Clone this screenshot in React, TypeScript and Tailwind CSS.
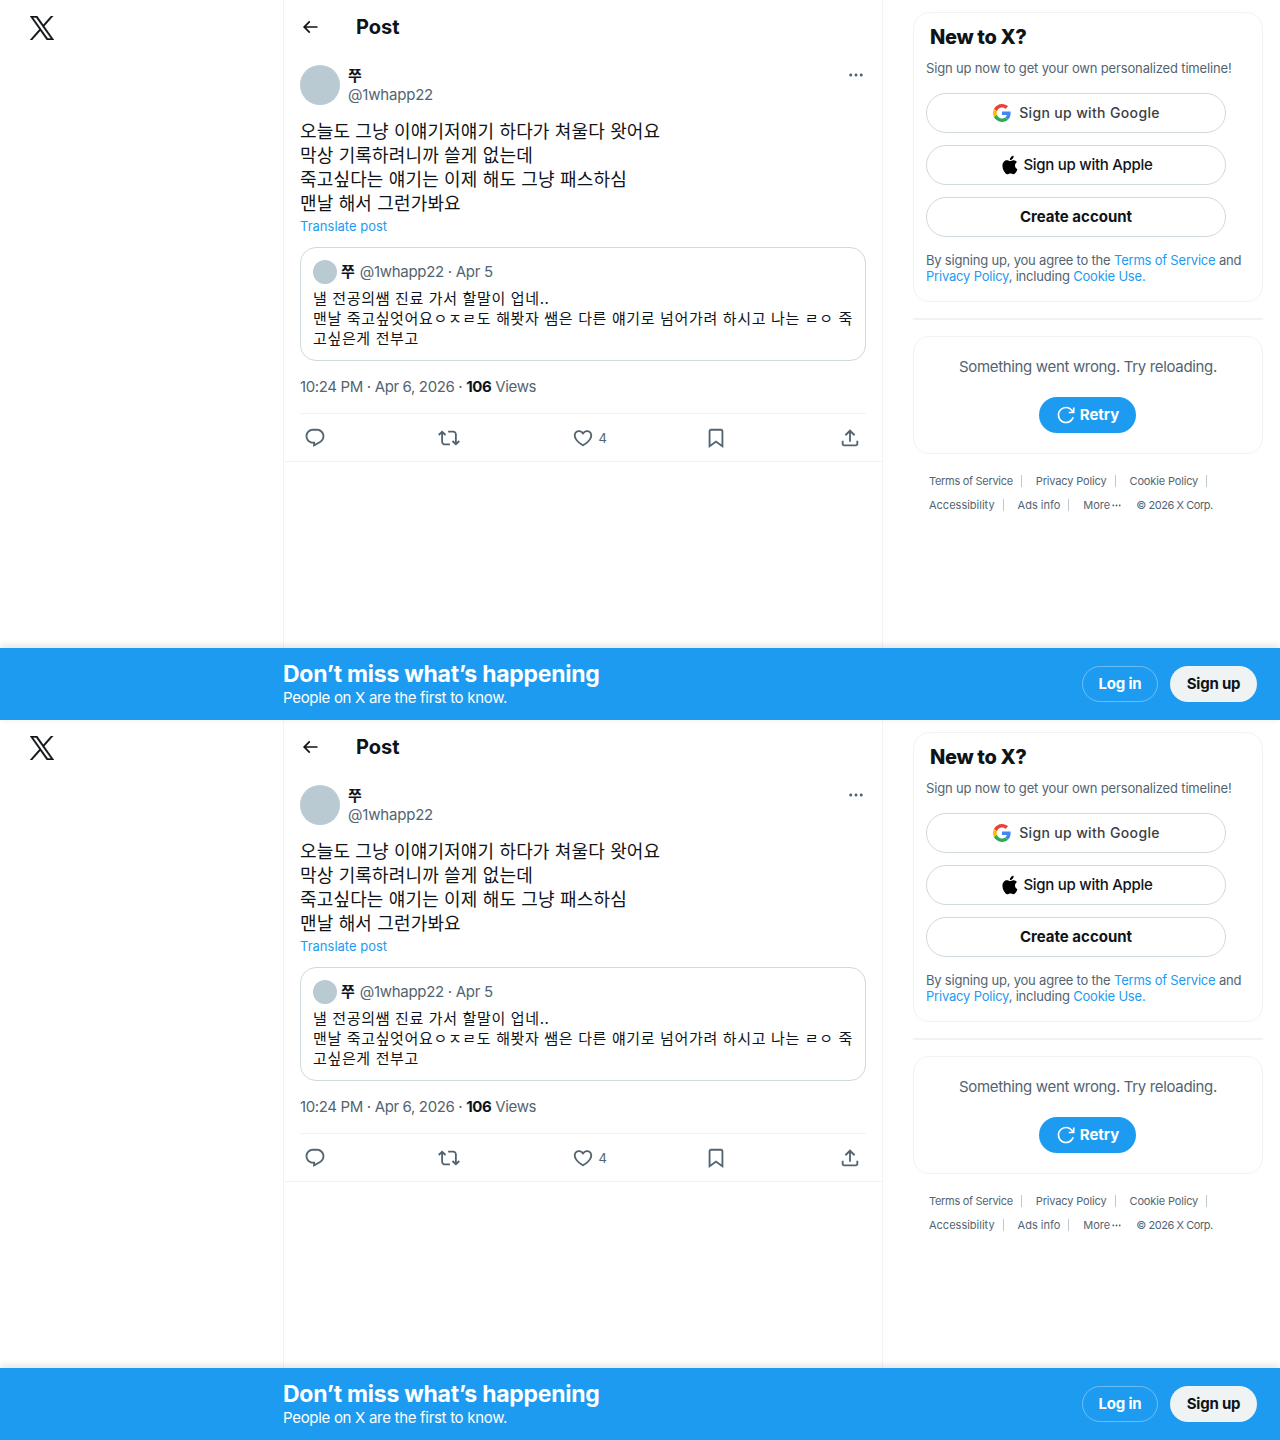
const icons = {
  x: 'M14.258 10.152L23.176 0h-2.113l-7.747 8.813L7.133 0H0l9.352 13.328L0 23.973h2.113l8.176-9.309 6.531 9.309h7.133zm-2.895 3.293l-.949-1.328L2.875 1.56h3.246l6.086 8.523.945 1.328 7.91 11.078h-3.246zm0 0',
  back: 'M7.414 13l5.043 5.04-1.414 1.42L3.586 12l7.457-7.46 1.414 1.42L7.414 11H21v2H7.414z',
  more: 'M3 12c0-1.1.9-2 2-2s2 .9 2 2-.9 2-2 2-2-.9-2-2zm9 2c1.1 0 2-.9 2-2s-.9-2-2-2-2 .9-2 2 .9 2 2 2zm7 0c1.1 0 2-.9 2-2s-.9-2-2-2-2 .9-2 2 .9 2 2 2z',
  reply: 'M1.751 10c0-4.42 3.584-8 8.005-8h4.366c4.49 0 8.129 3.64 8.129 8.13 0 2.96-1.607 5.68-4.196 7.11l-8.054 4.46v-3.69h-.067c-4.49.1-8.183-3.51-8.183-8.01zm8.005-6c-3.317 0-6.005 2.69-6.005 6 0 3.37 2.77 6.08 6.138 6.01l.351-.01h1.761v2.3l5.087-2.81c1.951-1.08 3.163-3.13 3.163-5.36 0-3.39-2.744-6.13-6.129-6.13H9.756z',
  repost: 'M4.5 3.88l4.432 4.14-1.364 1.46L5.5 7.55V16c0 1.1.896 2 2 2H13v2H7.5c-2.209 0-4-1.79-4-4V7.55L1.432 9.48.068 8.02 4.5 3.88zM16.5 6H11V4h5.5c2.209 0 4 1.79 4 4v8.45l2.068-1.93 1.364 1.46-4.432 4.14-4.432-4.14 1.364-1.46 2.068 1.93V8c0-1.1-.896-2-2-2z',
  heart: 'M16.697 5.5c-1.222-.06-2.679.51-3.89 2.16l-.805 1.09-.806-1.09C9.984 6.01 8.526 5.44 7.304 5.5c-1.243.07-2.349.78-2.91 1.91-.552 1.12-.633 2.78.479 4.82 1.074 1.97 3.257 4.27 7.129 6.61 3.87-2.34 6.052-4.64 7.126-6.61 1.111-2.04 1.03-3.7.477-4.82-.561-1.13-1.666-1.84-2.908-1.91zm4.187 7.69c-1.351 2.48-4.001 5.12-8.379 7.67l-.503.3-.504-.3c-4.379-2.55-7.029-5.19-8.382-7.67-1.36-2.5-1.41-4.86-.514-6.67.887-1.79 2.647-2.91 4.601-3.01 1.651-.09 3.368.56 4.798 2.01 1.429-1.45 3.146-2.1 4.796-2.01 1.954.1 3.714 1.22 4.601 3.01.896 1.81.846 4.17-.514 6.67z',
  bookmark: 'M4 4.5C4 3.12 5.119 2 6.5 2h11C18.881 2 20 3.12 20 4.5v18.44l-8-5.71-8 5.71V4.5zM6.5 4c-.276 0-.5.22-.5.5v14.56l6-4.29 6 4.29V4.5c0-.28-.224-.5-.5-.5h-11z',
  share: 'M12 2.59l5.7 5.7-1.41 1.42L13 6.41V16h-2V6.41l-3.3 3.3-1.41-1.42L12 2.59zM21 15l-.02 3.51c0 1.38-1.12 2.49-2.5 2.49H5.5C4.11 21 3 19.88 3 18.5V15h2v3.5c0 .28.22.5.5.5h12.98c.28 0 .5-.22.5-.51L19 15h2z',
  retry: 'M12 4c-4.418 0-8 3.58-8 8s3.582 8 8 8c3.584 0 6.615-2.35 7.635-5.6l1.91.6C20.272 19.06 16.479 22 12 22 6.477 22 2 17.52 2 12S6.477 2 12 2c3.46 0 6.51 1.76 8.3 4.43V3h2v7h-7V8h3.67C17.56 5.58 14.96 4 12 4z',
  apple: 'M16.365 1.43c0 1.14-.493 2.27-1.177 3.08-.744.9-1.99 1.57-2.987 1.57-.12 0-.23-.02-.3-.03-.01-.06-.04-.22-.04-.39 0-1.15.572-2.27 1.206-2.98.804-.94 2.142-1.64 3.248-1.68.03.13.05.28.05.43zm4.565 15.71c-.03.07-.463 1.58-1.518 3.12-.945 1.34-1.94 2.71-3.43 2.71-1.517 0-1.9-.88-3.63-.88-1.698 0-2.302.91-3.67.91-1.377 0-2.332-1.26-3.428-2.8-1.287-1.82-2.323-4.63-2.323-7.28 0-4.28 2.797-6.55 5.552-6.55 1.448 0 2.675.95 3.6.95.865 0 2.222-1.01 3.902-1.01.613 0 2.886.06 4.374 2.19-.13.09-2.383 1.37-2.383 4.19 0 3.26 2.854 4.42 2.955 4.45z',
};

const Icon = ({ d, className }: { d: string; className: string }) => (
  <svg viewBox="0 0 24 24" fill="currentColor" className={className}>
    <path d={d} />
  </svg>
);

const GoogleIcon = () => (
  <svg viewBox="0 0 48 48" className="h-[18px] w-[18px]">
    <path fill="#EA4335" d="M24 9.5c3.54 0 6.71 1.22 9.21 3.6l6.85-6.85C35.9 2.38 30.47 0 24 0 14.62 0 6.51 5.38 2.56 13.22l7.98 6.19C12.43 13.72 17.74 9.5 24 9.5z" />
    <path fill="#4285F4" d="M46.98 24.55c0-1.57-.15-3.09-.38-4.55H24v9.02h12.94c-.58 2.96-2.26 5.48-4.78 7.18l7.73 6c4.51-4.18 7.09-10.36 7.09-17.65z" />
    <path fill="#FBBC05" d="M10.53 28.59c-.48-1.45-.76-2.99-.76-4.59s.27-3.14.76-4.59l-7.98-6.19C.92 16.46 0 20.12 0 24c0 3.88.92 7.54 2.56 10.78l7.97-6.19z" />
    <path fill="#34A853" d="M24 48c6.48 0 11.93-2.13 15.89-5.81l-7.73-6c-2.15 1.45-4.92 2.3-8.16 2.3-6.26 0-11.57-4.22-13.47-9.91l-7.98 6.19C6.51 42.62 14.62 48 24 48z" />
  </svg>
);

const Separator = ({ end }: { end?: boolean }) => (
  <span className={end ? 'ml-[8px] h-3 w-px bg-[#b9cad3]' : 'ml-[8px] mr-[14px] h-3 w-px bg-[#b9cad3]'} />
);

const PostColumn = () => (
  <main className="w-[600px] shrink-0 border-x border-[#eff3f4]">
    <div className="flex h-[54px] items-center pl-[16px]">
      <Icon d={icons.back} className="h-5 w-5 text-[#0f1419]" />
      <h2 className="ml-[36px] text-[20px] font-bold leading-6 text-[#0f1419]">Post</h2>
    </div>
    <div className="px-[16px] pt-[11px]">
      <div className="flex items-center gap-[8px]">
        <div className="h-10 w-10 rounded-full bg-[#b9cad3]" />
        <div className="flex-1">
          <div className="h-5 pt-[2px] text-[15px] font-bold leading-[18px] text-[#0f1419]">쭈</div>
          <div className="text-[15px] leading-5 tracking-[-0.2px] text-[#536471]">@1whapp22</div>
        </div>
        <Icon d={icons.more} className="mb-[20px] mr-[1px] h-[18px] w-[18px] text-[#536471]" />
      </div>
      <div className="mt-[15px] text-[18px] leading-6 tracking-[0.15px] text-[#0f1419]">
        <p>오늘도 그냥 이얘기저얘기 하다가 쳐울다 왓어요</p>
        <p>막상 기록하려니까 쓸게 없는데</p>
        <p>죽고싶다는 얘기는 이제 해도 그냥 패스하심</p>
        <p>맨날 해서 그런가봐요</p>
      </div>
      <div className="mt-[2px] text-[13px] leading-4 text-[#1d9bf0]">Translate post</div>
      <div className="mt-[13px] rounded-2xl border border-[#cfd9de] px-[12px] pb-[11px] pt-[12px]">
        <div className="flex items-center text-[15px] leading-6">
          <div className="mr-[4px] h-6 w-6 rounded-full bg-[#b9cad3]" />
          <span className="font-bold text-[#0f1419]">쭈</span>
          <span className="ml-[5px] tracking-[-0.3px] text-[#536471]">@1whapp22 · Apr 5</span>
        </div>
        <div className="mt-[5px] text-[15px] leading-5 tracking-[0.65px] text-[#0f1419]">
          <p>낼 전공의쌤 진료 가서 할말이 업네..</p>
          <p>맨날 죽고싶엇어요ㅇㅈㄹ도 해봣자 쌤은 다른 얘기로 넘어가려 하시고 나는 ㄹㅇ 죽고싶은게 전부고</p>
        </div>
      </div>
      <div className="mt-[16px] text-[15px] leading-5 tracking-[-0.36px] text-[#536471]">
        10:24 PM · Apr 6, 2026 · <span className="font-bold text-[#0f1419]">106</span> Views
      </div>
      <div className="mt-[16px] flex h-[48px] items-center justify-between border-t border-[#eff3f4] pl-[4px] pr-[5px] text-[#536471]">
        <Icon d={icons.reply} className="h-[22px] w-[22px]" />
        <Icon d={icons.repost} className="h-[22px] w-[22px]" />
        <div className="flex w-[22px] items-center">
          <Icon d={icons.heart} className="h-[22px] w-[22px] shrink-0" />
          <span className="ml-[5px] mt-[2px] text-[13px]">4</span>
        </div>
        <Icon d={icons.bookmark} className="h-[22px] w-[22px]" />
        <Icon d={icons.share} className="h-[22px] w-[22px]" />
      </div>
    </div>
    <div className="border-b border-[#eff3f4]" />
  </main>
);

const Sidebar = () => (
  <aside className="ml-[30px] w-[350px] shrink-0 pt-[12px]">
    <div className="h-[290px] rounded-2xl border border-[#eff3f4] px-[12px] pt-[12px]">
      <h2 className="ml-[4px] text-[20px] font-extrabold leading-6 tracking-[-0.35px] text-[#0f1419]">New to X?</h2>
      <p className="mt-[11px] text-[13px] leading-4 tracking-[-0.16px] text-[#536471]">Sign up now to get your own personalized timeline!</p>
      <div className="mt-[17px] flex w-[300px] flex-col gap-[12px]">
        <button className="flex h-10 items-center justify-center gap-[8px] rounded-full border border-[#cfd9de] pb-[1px] pl-[1px] text-[14px] font-medium tracking-[0.35px] text-[#3c4043]">
          <GoogleIcon />
          Sign up with Google
        </button>
        <button className="flex h-10 items-center justify-center gap-[3px] rounded-full border border-[#cfd9de] text-[15px] font-medium tracking-[-0.28px] text-[#0f1419]">
          <Icon d={icons.apple} className="ml-[1px] h-5 w-5 text-black" />
          Sign up with Apple
        </button>
        <button className="h-10 rounded-full border border-[#cfd9de] text-[15px] font-bold text-[#0f1419]">Create account</button>
      </div>
      <p className="mt-[15px] text-[13px] leading-4 tracking-[-0.2px] text-[#536471]">
        By signing up, you agree to the <span className="text-[#1d9bf0]">Terms of Service</span> and{' '}
        <span className="text-[#1d9bf0]">Privacy Policy</span>, including <span className="text-[#1d9bf0]">Cookie Use.</span>
      </p>
    </div>
    <div className="mt-[16px] h-[2px] bg-[#eff3f4]" />
    <div className="mt-[16px] flex h-[118px] flex-col items-center rounded-2xl border border-[#eff3f4] pt-[20px]">
      <p className="text-[15px] leading-5 tracking-[-0.34px] text-[#536471]">Something went wrong. Try reloading.</p>
      <button className="mr-[1px] mt-[20px] flex h-9 w-[97px] items-center justify-center gap-[4px] rounded-full bg-[#1d9bf0] text-[15px] font-bold text-white">
        <Icon d={icons.retry} className="h-5 w-5" />
        Retry
      </button>
    </div>
    <div className="mt-[15px] pl-[16px] text-[11px] leading-4 text-[#536471]">
      <div className="flex h-[24px] items-center tracking-[-0.15px]">
        <span className="tracking-[-0.3px]">Terms of Service</span>
        <Separator />
        <span>Privacy Policy</span>
        <Separator />
        <span>Cookie Policy</span>
        <Separator end />
      </div>
      <div className="flex h-[24px] items-center">
        <span>Accessibility</span>
        <Separator />
        <span>Ads info</span>
        <Separator />
        <span>More</span>
        <Icon d={icons.more} className="ml-[1px] h-[11px] w-[11px]" />
        <span className="ml-[14px] tracking-[-0.45px]">© 2026 X Corp.</span>
      </div>
    </div>
  </aside>
);

const Screen = () => (
  <section className="flex h-[720px] flex-col">
    <div className="flex h-[648px]">
      <div className="w-[283px] shrink-0 pl-[30px] pt-[16px]">
        <Icon d={icons.x} className="h-6 w-6 stroke-current stroke-[0.4px] text-[#0f1419]" />
      </div>
      <PostColumn />
      <Sidebar />
    </div>
    <div className="flex h-[72px] items-center bg-[#1d9bf0] pl-[283px] pr-[23px] shadow-[0_-2px_8px_rgba(0,0,0,0.12)]">
      <div className="mt-[1px] flex-1 text-white">
        <div className="text-[23px] font-bold leading-[26px] tracking-[-0.26px]">Don’t miss what’s happening</div>
        <div className="mt-[1px] text-[15px] leading-5 tracking-[-0.3px]">People on X are the first to know.</div>
      </div>
      <button className="h-9 w-[76px] rounded-full border border-[#ffffff59] text-[15px] font-bold tracking-[-0.2px] text-white">Log in</button>
      <button className="ml-[12px] h-9 w-[87px] rounded-full bg-[#eff3f4] text-[15px] font-bold tracking-[-0.2px] text-[#0f1419]">Sign up</button>
    </div>
  </section>
);

export default function App() {
  return (
    <div className="bg-white font-['Inter','Noto_Sans_CJK_KR',sans-serif]">
      <Screen />
      <Screen />
    </div>
  );
}
